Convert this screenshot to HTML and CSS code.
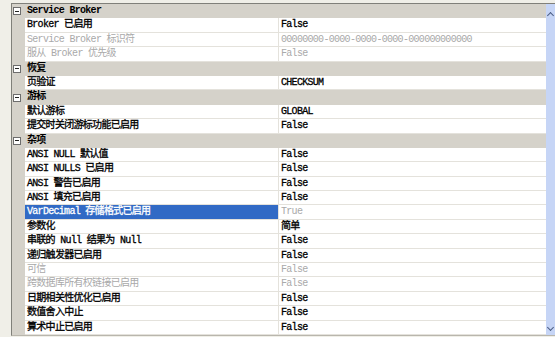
FILE: index.html
```html
<!DOCTYPE html>
<html lang="zh-CN">
<head>
  <meta charset="UTF-8">
  <title>数据库属性 - 选项</title>
  <link rel="stylesheet" href="styles.css">
</head>
<body>
  <div class="grid">
    <div class="rows">
      <!-- Service Broker -->
      <div class="row cat"><span class="gut"><i class="toggle"></i></span><span class="title">Service Broker</span></div>
      <div class="row"><span class="gut"></span><span class="name">Broker 已启用</span><span class="val">False</span></div>
      <div class="row off"><span class="gut"></span><span class="name">Service Broker 标识符</span><span class="val">00000000-0000-0000-0000-000000000000</span></div>
      <div class="row off"><span class="gut"></span><span class="name">服从 Broker 优先级</span><span class="val">False</span></div>

      <!-- 恢复 -->
      <div class="row cat"><span class="gut"><i class="toggle"></i></span><span class="title">恢复</span></div>
      <div class="row"><span class="gut"></span><span class="name">页验证</span><span class="val">CHECKSUM</span></div>

      <!-- 游标 -->
      <div class="row cat"><span class="gut"><i class="toggle"></i></span><span class="title">游标</span></div>
      <div class="row"><span class="gut"></span><span class="name">默认游标</span><span class="val">GLOBAL</span></div>
      <div class="row"><span class="gut"></span><span class="name">提交时关闭游标功能已启用</span><span class="val">False</span></div>

      <!-- 杂项 -->
      <div class="row cat"><span class="gut"><i class="toggle"></i></span><span class="title">杂项</span></div>
      <div class="row"><span class="gut"></span><span class="name">ANSI NULL 默认值</span><span class="val">False</span></div>
      <div class="row"><span class="gut"></span><span class="name">ANSI NULLS 已启用</span><span class="val">False</span></div>
      <div class="row"><span class="gut"></span><span class="name">ANSI 警告已启用</span><span class="val">False</span></div>
      <div class="row"><span class="gut"></span><span class="name">ANSI 填充已启用</span><span class="val">False</span></div>
      <div class="row selected"><span class="gut"></span><span class="name">VarDecimal 存储格式已启用</span><span class="val">True</span></div>
      <div class="row"><span class="gut"></span><span class="name">参数化</span><span class="val">简单</span></div>
      <div class="row"><span class="gut"></span><span class="name">串联的 Null 结果为 Null</span><span class="val">False</span></div>
      <div class="row"><span class="gut"></span><span class="name">递归触发器已启用</span><span class="val">False</span></div>
      <div class="row off"><span class="gut"></span><span class="name">可信</span><span class="val">False</span></div>
      <div class="row off"><span class="gut"></span><span class="name">跨数据库所有权链接已启用</span><span class="val">False</span></div>
      <div class="row"><span class="gut"></span><span class="name">日期相关性优化已启用</span><span class="val">False</span></div>
      <div class="row"><span class="gut"></span><span class="name">数值舍入中止</span><span class="val">False</span></div>
      <div class="row"><span class="gut"></span><span class="name">算术中止已启用</span><span class="val">False</span></div>
    </div>

    <!-- Scrollbar -->
    <div class="scroll">
      <span class="arrow up"></span>
      <span class="arrow down"></span>
    </div>
  </div>
</body>
</html>
```

FILE: styles.css
```css
:root {
  --bg: #f0efe8;
  --gray: #d5d2ca;
  --line: #e4e2dc;
  --border: #80807a;
  --muted: #a9a9a9;
  --select: #316ac5;
  --scroll: #c6d5f6;
}

* {
  margin: 0;
  padding: 0;
  box-sizing: border-box;
}

body {
  background: var(--bg);
  font-family: "Liberation Mono", "Noto Sans CJK SC", monospace;
  font-size: 10px;
  letter-spacing: -0.7px;
  color: #000;
  padding: 3px 0 0 11px;
  height: 337px;
  overflow: hidden;
}

.grid {
  display: flex;
  border-left: 1px solid var(--border);
  border-top: 1px solid var(--border);
  border-bottom: 1px solid #b9b6ad;
}

.rows {
  width: 534px;
}

/* Rows */
.row {
  display: grid;
  grid-template-columns: 13px 254px 1fr;
  height: 14.4px;
  line-height: 13px;
  white-space: nowrap;
}

.gut {
  background: var(--gray);
  display: flex;
  align-items: center;
}

.name,
.val {
  background: #fff;
  border-bottom: 1px solid var(--line);
  padding-left: 2px;
  overflow: hidden;
  -webkit-text-stroke: 0.3px currentColor;
}

.name {
  border-right: 1px solid var(--line);
}

.off .name,
.off .val {
  color: var(--muted);
  -webkit-text-stroke: 0;
}

.selected .name {
  background: var(--select);
  color: #fff;
}

.selected .val {
  color: var(--muted);
  -webkit-text-stroke: 0;
}

/* Category rows */
.cat {
  background: var(--gray);
}

.cat .title {
  grid-column: 2 / 4;
  padding-left: 2px;
  font-weight: bold;
}

.toggle {
  display: block;
  width: 8px;
  height: 8px;
  margin-left: 1px;
  border: 1px solid #6d6d6d;
  background: #fff;
  position: relative;
}

.toggle::after {
  content: "";
  position: absolute;
  left: 1px;
  right: 1px;
  top: 2.5px;
  height: 1px;
  background: #222;
}

/* Scrollbar */
.scroll {
  flex: 1;
  background: var(--scroll);
  display: flex;
  flex-direction: column;
  justify-content: space-between;
  align-items: center;
  padding: 7px 0 5px;
}

.arrow {
  width: 5px;
  height: 5px;
  border-left: 1.5px solid #4d5f86;
  border-top: 1.5px solid #4d5f86;
}

.arrow.up {
  transform: rotate(45deg);
  margin-top: 2px;
}

.arrow.down {
  transform: rotate(225deg);
}
```
